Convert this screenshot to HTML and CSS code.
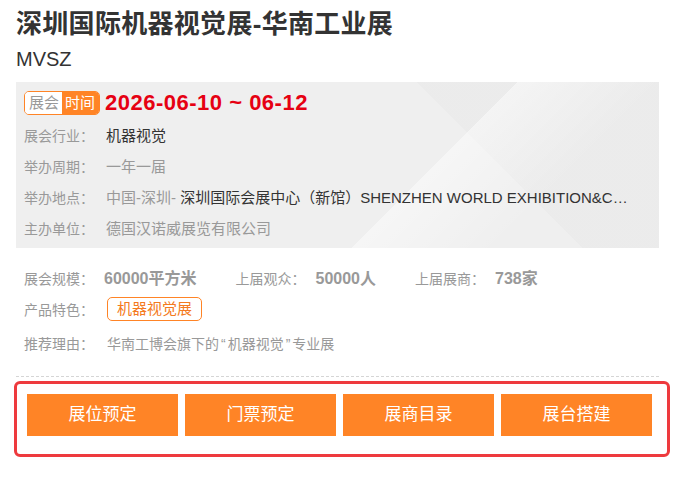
FILE: index.html
```html
<!DOCTYPE html>
<html lang="zh-CN">
<head>
    <meta charset="UTF-8">
    <meta name="viewport" content="width=device-width, initial-scale=1.0">
    <title>深圳国际机器视觉展-华南工业展</title>
    <link rel="stylesheet" href="styles.css">
</head>
<body>
    <div class="expo">
        <h1 class="expo-title">深圳国际机器视觉展-华南工业展</h1>
        <div class="expo-abbr">MVSZ</div>

        <div class="info-box">
            <div class="date-row">
                <span class="date-tag"><span class="tag-l">展会</span><span class="tag-r">时间</span></span>
                <span class="date">2026-06-10 ~ 06-12</span>
            </div>
            <div class="info-row"><span class="label">展会行业：</span><span class="val dark">机器视觉</span></div>
            <div class="info-row"><span class="label">举办周期：</span><span class="val">一年一届</span></div>
            <div class="info-row"><span class="label">举办地点：</span><span class="val">中国-深圳- <span class="dark">深圳国际会展中心（新馆）SHENZHEN WORLD EXHIBITION&amp;CONVENTION CENTER</span></span></div>
            <div class="info-row"><span class="label">主办单位：</span><span class="val">德国汉诺威展览有限公司</span></div>
        </div>

        <div class="stats">
            <div class="stat"><span class="label">展会规模：</span><b>60000平方米</b></div>
            <div class="stat"><span class="label">上届观众：</span><b>50000人</b></div>
            <div class="stat"><span class="label">上届展商：</span><b>738家</b></div>
        </div>
        <div class="feature-row"><span class="label">产品特色：</span><span class="feature">机器视觉展</span></div>
        <div class="reason-row"><span class="label">推荐理由：</span><span class="val">华南工博会旗下的<span class="q">“</span>机器视觉<span class="q">”</span>专业展</span></div>

        <div class="divider"></div>

        <div class="actions">
            <a class="btn" href="#">展位预定</a>
            <a class="btn" href="#">门票预定</a>
            <a class="btn" href="#">展商目录</a>
            <a class="btn" href="#">展台搭建</a>
        </div>
    </div>
</body>
</html>
```

FILE: styles.css
```css
body { margin: 0; padding: 0; background: #fff; font-family: "Liberation Sans", Arial, "Noto Sans CJK SC", sans-serif; color: #333; }
.expo { width: 643px; margin-left: 16px; }

.expo-title { margin: 0; padding-top: 8px; font-size: 26px; line-height: 32px; font-weight: bold; color: #333; letter-spacing: 0.3px; }
.expo-abbr { font-size: 20px; line-height: 24px; margin-top: 7px; color: #333; }

.info-box { margin-top: 11px; padding: 9px 20px 4px 8px; height: 153px;
    background-color: #efefef;
    background-image:
        linear-gradient(135deg, rgba(255,255,255,0) 62%, rgba(255,255,255,.45) 62%, rgba(255,255,255,0) 80%),
        linear-gradient(45deg, rgba(255,255,255,0) 70%, rgba(235,235,235,.9) 70%);
}
.date-row { display: flex; align-items: center; height: 24px; margin-bottom: 5px; }
.date-tag { display: flex; height: 22px; border: 1px solid #ff8426; border-radius: 5px; overflow: hidden; font-size: 15px; line-height: 22px; }
.tag-l { background: #fff; color: #999; padding: 0 3px 0 4px; }
.tag-r { background: #ff8426; color: #fff; padding: 0 4px 0 3px; }
.date { margin-left: 5px; font-size: 22px; font-weight: bold; color: #e60012; letter-spacing: 0.5px; }

.info-row { height: 31px; line-height: 31px; font-size: 15px; white-space: nowrap; overflow: hidden; text-overflow: ellipsis; }
.label { display: inline-block; width: 82px; color: #999; font-size: 14px; }
.val { color: #999; }
.dark { color: #333; }

.stats { display: flex; margin: 13px 0 0 8px; height: 32px; align-items: center; }
.stat { margin-right: 39px; font-size: 14px; }
.stat .label { width: 80px; }
.stat b { color: #999; font-size: 16px; }

.feature-row { display: flex; align-items: center; height: 32px; margin-left: 8px; }
.feature-row .label { width: 83px; }
.feature { display: inline-block; height: 22px; line-height: 22px; padding: 0 9px; border: 1px solid #ff8426; border-radius: 5px; color: #f47a20; font-size: 15px; }

.reason-row { margin: 3px 0 0 8px; height: 32px; line-height: 32px; font-size: 14px; }
.reason-row .label { width: 83px; }
.q { padding: 0 2px; }

.divider { margin-top: 16px; border-top: 1px dashed #d5d5d5; }

.actions { display: grid; grid-template-columns: repeat(4, 151px); gap: 7px; margin: 4px -11px 0 -2px; padding: 10px 14px 18px 10px; border: 3px solid #ee3a3e; border-radius: 6px; }
.btn { display: block; height: 42px; line-height: 42px; text-align: center; background: #ff8426; color: #fff; font-size: 17px; text-decoration: none; }
```
